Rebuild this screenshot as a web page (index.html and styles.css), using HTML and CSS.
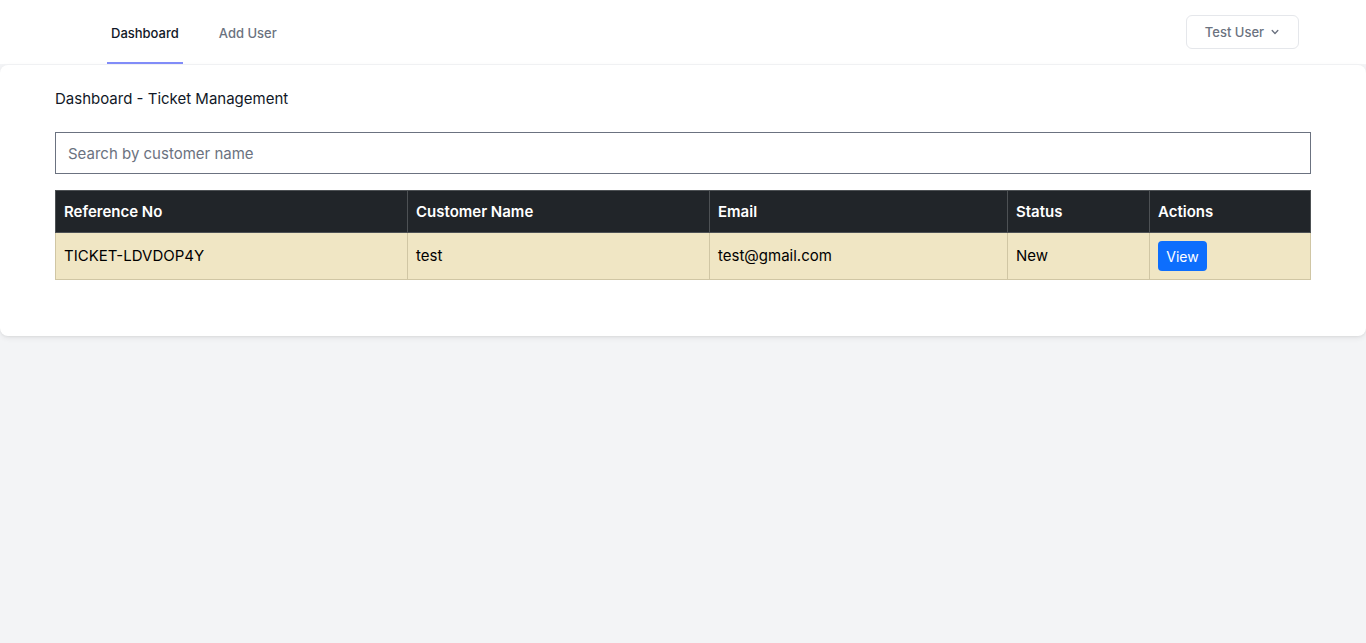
FILE: index.html
```html
<!DOCTYPE html>
<html lang="en">
<head>
<meta charset="utf-8">
<title>Dashboard</title>
<link rel="stylesheet" href="styles.css">
</head>
<body>
<nav class="nav">
  <div class="nav-inner">
    <div class="nav-links">
      <a class="nav-link active" href="#">Dashboard</a>
      <a class="nav-link" href="#">Add User</a>
    </div>
    <button class="user-btn">Test User
      <svg class="chev" width="14" height="14" viewBox="0 0 20 20" fill="currentColor"><path fill-rule="evenodd" d="M5.293 7.293a1 1 0 011.414 0L10 10.586l3.293-3.293a1 1 0 111.414 1.414l-4 4a1 1 0 01-1.414 0l-4-4a1 1 0 010-1.414z" clip-rule="evenodd"/></svg>
    </button>
  </div>
</nav>
<main class="card">
  <h1 class="title">Dashboard - Ticket Management</h1>
  <input class="search" type="text" placeholder="Search by customer name">
  <table class="tbl">
    <colgroup>
      <col style="width:352px"><col style="width:302px"><col style="width:298px"><col style="width:142px"><col>
    </colgroup>
    <thead>
      <tr><th>Reference No</th><th>Customer Name</th><th>Email</th><th>Status</th><th>Actions</th></tr>
    </thead>
    <tbody>
      <tr><td>TICKET-LDVDOP4Y</td><td>test</td><td>test@gmail.com</td><td>New</td><td><button class="view-btn">View</button></td></tr>
    </tbody>
  </table>
</main>
</body>
</html>
```
FILE: styles.css
```css
* { box-sizing: border-box; }
html, body { margin: 0; }
body {
  background: #f3f4f6;
  font-family: Inter, "Noto Sans", sans-serif;
  color: #111827;
  min-height: 643px;
}
.nav {
  background: #fff;
  border-bottom: 1px solid #f3f4f6;
  height: 65px;
}
.nav-inner {
  height: 64px;
  display: flex;
  justify-content: space-between;
  align-items: center;
  padding: 0 67px 0 107px;
}
.nav-links { display: flex; gap: 32px; height: 100%; }
.nav-link {
  display: flex;
  align-items: center;
  padding: 4px 4px 0;
  font-size: 13px;
  font-weight: 500;
  color: #6b7280;
  text-decoration: none;
  border-bottom: 2px solid transparent;
}
.nav-link.active { color: #111827; border-bottom-color: #818cf8; }
.user-btn {
  height: 34px;
  width: 113px;
  border: 1px solid #e5e7eb;
  border-radius: 6px;
  background: #fff;
  color: #6b7280;
  font-family: inherit;
  font-size: 13px;
  font-weight: 500;
  display: flex;
  align-items: center;
  justify-content: center;
  gap: 4px;
  padding: 0 0 0 2px;
  margin-top: -1px;
}
.card {
  background: #fff;
  border-radius: 8px;
  box-shadow: 0 2px 6px -1px rgba(0,0,0,.1), 0 1px 3px -1px rgba(0,0,0,.08);
  padding: 24px 55px 40px;
}
.title {
  margin: 0 0 23px;
  font-size: 15px;
  font-weight: 400;
  line-height: 20px;
  color: #111827;
}
.search {
  display: block;
  width: 100%;
  height: 42px;
  border: 1px solid #6b7280;
  border-radius: 0;
  padding: 0 12px;
  font-family: inherit;
  font-size: 15px;
  color: #111827;
  margin-bottom: 16px;
}
.search::placeholder { color: #6b7280; }
.tbl {
  width: 100%;
  border-collapse: collapse;
  table-layout: fixed;
  font-size: 15px;
  margin-bottom: 16px;
}
.tbl th, .tbl td {
  text-align: left;
  padding: 8px;
  border: 1px solid #d0c6a4;
}
.tbl th {
  background: #212529;
  color: #fff;
  font-weight: 600;
  border-color: #4d5154;
  height: 42px;
}
.tbl td {
  background: #f0e6c4;
  color: #000;
  height: 47px;
  padding: 7px 8px 8px;
}
.view-btn {
  background: #0d6efd;
  color: #fff;
  border: 0;
  border-radius: 4px;
  font-family: inherit;
  font-size: 14px;
  height: 30px;
  width: 49px;
  padding: 0;
  display: block;
  margin-top: 1px;
}
```
